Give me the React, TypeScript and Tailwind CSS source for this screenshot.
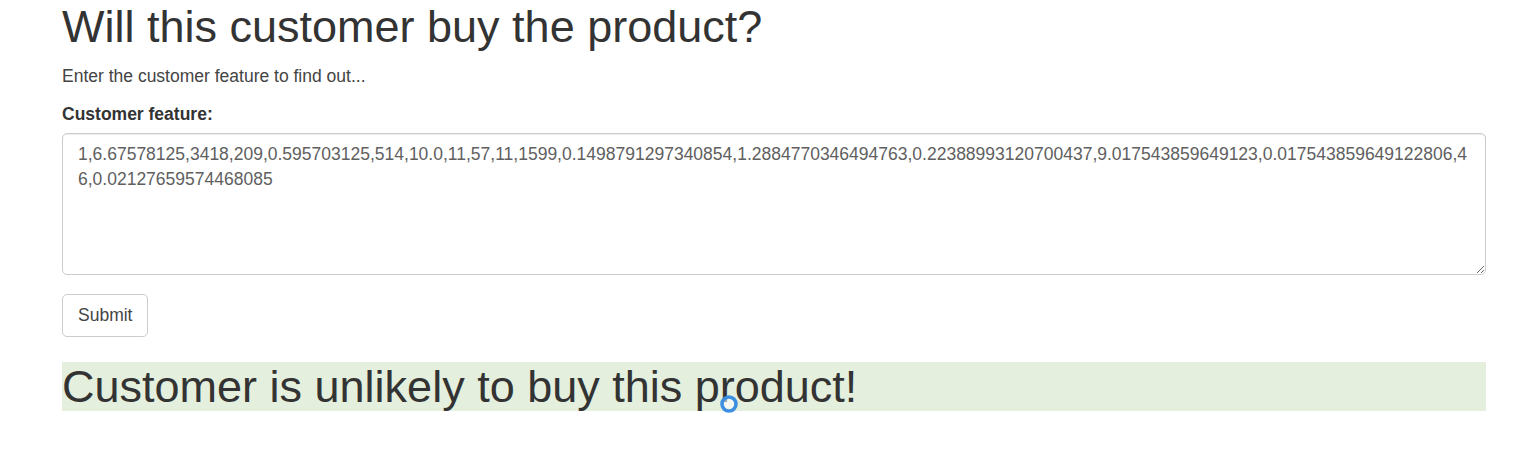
import React from "react";

export default function App() {
  const value =
    "1,6.67578125,3418,209,0.595703125,514,10.0,11,57,11,1599,0.1498791297340854,1.2884770346494763,0.22388993120700437,9.017543859649123,0.017543859649122806,4\n6,0.02127659574468085";
  return (
    <div className="relative min-h-[476px] bg-white font-['Liberation_Sans',Arial,sans-serif] text-[17.5px] leading-[25px] text-[#333]">
      <div className="ml-[62px] w-[1424px] pt-[2px]">
        <h1 className="mb-[12.5px] text-[45px] font-normal leading-[49.5px] text-[#333]">
          Will this customer buy the product?
        </h1>
        <p className="mb-[12.5px] text-[#444]">Enter the customer feature to find out...</p>
        <label className="mb-[6.5px] block font-bold">Customer feature:</label>
        <textarea
          defaultValue={value}
          className="block h-[142px] w-[1424px] rounded-[5px] border border-[#ccc] bg-white px-[15px] py-[8px] text-[17.5px] leading-[25px] text-[#606060] shadow-[inset_0_1px_1px_rgba(0,0,0,0.075)] outline-none"
        />
        <button className="mt-[19px] h-[43px] rounded-[5px] border border-[#ccc] bg-white px-[15px] text-[17.5px] leading-[25px] text-[#444]">
          Submit
        </button>
        <h1 className="relative mt-[25px] bg-[#e4efdd] text-[45px] font-normal leading-[49px] text-[#333]">
          Customer is unlikely to buy this product!
        </h1>
      </div>
      <svg
        className="pointer-events-none absolute left-[718px] top-[393px]"
        width="22"
        height="22"
        viewBox="0 0 22 22"
      >
        <circle cx="11" cy="11" r="7" fill="rgba(255,255,255,0.55)" stroke="#3d8fe0" strokeWidth="3.6" />
      </svg>
    </div>
  );
}
